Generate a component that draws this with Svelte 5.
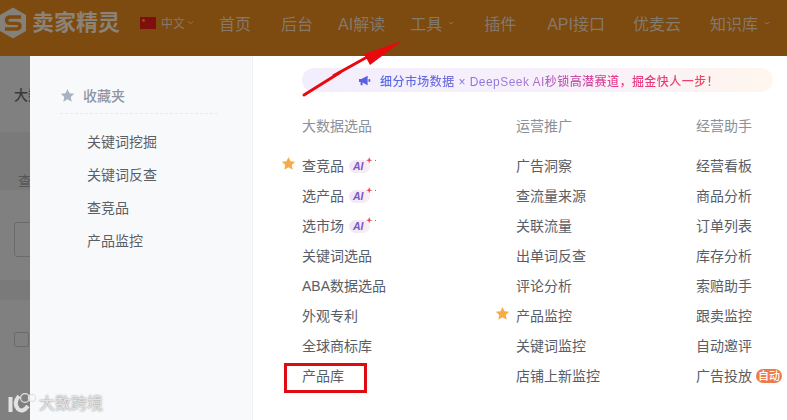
<script>
  const nav = [
    { t: '首页' }, { t: '后台' }, { t: 'AI解读' }, { t: '工具', c: true },
    { t: '插件' }, { t: 'API接口' }, { t: '优麦云' }, { t: '知识库', c: true }
  ];
  const favs = ['关键词挖掘', '关键词反查', '查竞品', '产品监控'];
  const cols = [
    { title: '大数据选品', cls: 'c1', items: [
      { t: '查竞品', ai: true, star: true }, { t: '选产品', ai: true }, { t: '选市场', ai: true },
      { t: '关键词选品' }, { t: 'ABA数据选品' }, { t: '外观专利' }, { t: '全球商标库' }, { t: '产品库' }
    ] },
    { title: '运营推广', cls: 'c2', items: [
      { t: '广告洞察' }, { t: '查流量来源' }, { t: '关联流量' }, { t: '出单词反查' }, { t: '评论分析' },
      { t: '产品监控', star: true }, { t: '关键词监控' }, { t: '店铺上新监控' }
    ] },
    { title: '经营助手', cls: 'c3', items: [
      { t: '经营看板' }, { t: '商品分析' }, { t: '订单列表' }, { t: '库存分析' }, { t: '索赔助手' },
      { t: '跟卖监控' }, { t: '自动邀评' }, { t: '广告投放', auto: true }
    ] }
  ];
  const starPath = 'M12 1.5l3.2 6.9 7.5.9-5.5 5.1 1.5 7.4L12 18.1l-6.7 3.7 1.5-7.4L1.3 9.3l7.5-.9z';
</script>

<div class="page">
  <header class="top">
    <div class="logo">
      <svg class="logo-mark" viewBox="0 0 27 32" width="27" height="32">
        <path d="M13 0.5L26 8V24L13 31.5L0 24V8Z" fill="#85807a"/>
        <path d="M21 10H10.5Q6.5 10 6.5 13.2T10.5 16.4H16.5Q20 16.4 20 19T16.5 22H5" fill="none" stroke="#7d4a10" stroke-width="3.4"/>
      </svg>
      <span class="logo-text">卖家精灵</span>
    </div>
    <div class="lang">
      <svg class="flag" viewBox="0 0 16 12" width="16" height="12">
        <rect width="16" height="12" fill="#7f0f0c"/>
        <circle cx="3.5" cy="3.5" r="1.4" fill="#8a5a10"/>
      </svg>
      <span>中文</span>
      <svg class="chev" viewBox="0 0 8 5" width="7" height="5"><path d="M1 1l3 3 3-3" fill="none" stroke="#8a7f70" stroke-width="1"/></svg>
    </div>
    <nav class="nav">
      {#each nav as n}
        <span class="nav-item">
          {n.t}
          {#if n.c}
            <svg class="chev small" viewBox="0 0 8 5" width="6" height="4"><path d="M1 1l3 3 3-3" fill="none" stroke="#8a7f70" stroke-width="1.2"/></svg>
          {/if}
        </span>
      {/each}
    </nav>
  </header>

  <div class="body">
    <div class="behind">
      <div class="b-row title"><span>大数</span></div>
      <div class="b-row darker tab"><span>查</span></div>
      <div class="b-row search"><span class="box"></span></div>
      <div class="b-row darker thin"></div>
      <div class="b-row check"><span class="cb"></span></div>
    </div>

    <aside class="side">
      <div class="side-head">
        <svg viewBox="0 0 24 24" width="15" height="15"><path d={starPath} fill="#a9b2c0"/></svg>
        <span>收藏夹</span>
      </div>
      <ul class="fav">
        {#each favs as f}<li>{f}</li>{/each}
      </ul>
    </aside>

    <main class="main">
      <div class="banner">
        <svg class="horn" viewBox="0 0 16 14" width="13" height="11">
          <path d="M1 5h3l8-4v12L4 9H1z" fill="#5b5fe0"/>
          <rect x="13" y="5" width="2.4" height="4" rx="1" fill="#5b5fe0"/>
          <rect x="3" y="9" width="2.6" height="4" fill="#5b5fe0"/>
        </svg>
        <span class="grad">细分市场数据 × DeepSeek AI秒锁高潜赛道，掘金快人一步！</span>
      </div>
      <div class="cols">
        {#each cols as col}
          <section class="col {col.cls}">
            <h4>{col.title}</h4>
            <ul>
              {#each col.items as it}
                <li>
                  {#if it.star}
                    <svg class="star" viewBox="0 0 24 24" width="15" height="15"><path d={starPath} fill="#f8ab45"/></svg>
                  {/if}
                  <span>{it.t}</span>
                  {#if it.ai}
                    <span class="ai">AI<svg viewBox="0 0 10 10" width="8" height="8"><path d="M4 0l1 3 3 1-3 1-1 3-1-3-3-1 3-1z" fill="#e8455c"/></svg><i></i></span>
                  {/if}
                  {#if it.auto}<span class="auto">自动</span>{/if}
                </li>
              {/each}
            </ul>
          </section>
        {/each}
      </div>
    </main>
  </div>

  <svg class="arrow" viewBox="0 0 787 420" width="787" height="420">
    <path d="M304 95L340 72.5" stroke="#e8090f" stroke-width="3" stroke-linecap="round"/>
    <path d="M403 41L365 54L371 65Z" fill="#e8090f" transform="translate(-1 0)"/>
    <path d="M333 76L369 56" stroke="#e8090f" stroke-width="3"/>
  </svg>
  <div class="redbox"></div>
  <div class="mark">
    <svg viewBox="0 0 28 24" width="28" height="24">
      <path d="M2.5 5v15M11 4Q5 11 10 17Q15 21 20 14" fill="none" stroke="#e2e2e2" stroke-width="4"/>
      <circle cx="17" cy="6" r="4.4" fill="none" stroke="#e2e2e2" stroke-width="1.2"/>
      <circle cx="24" cy="6" r="3.6" fill="none" stroke="#e2e2e2" stroke-width="1.2"/>
    </svg>
    <span>大数跨境</span>
  </div>
</div>

<style>
  :global(body) { margin: 0; }
  .page {
    position: relative;
    width: 787px;
    height: 420px;
    overflow: hidden;
    font-family: "Liberation Sans", "Noto Sans CJK SC", sans-serif;
    font-size: 14px;
    color: #595d66;
    background: #fff;
  }
  ul { list-style: none; margin: 0; padding: 0; }

  .top {
    height: 56px;
    box-sizing: border-box;
    padding-bottom: 11px;
    background: #7d4a10;
    display: flex;
    align-items: center;
    color: #85796b;
  }
  .logo { display: flex; align-items: center; width: 140px; flex: none; }
  .logo-mark { flex: none; }
  .logo-text {
    margin-left: 5px;
    font-size: 22px;
    font-weight: 700;
    color: #8b8378;
    line-height: 1;
    white-space: nowrap;
  }
  .lang { display: flex; align-items: center; width: 79px; flex: none; font-size: 12px; color: #85796b; }
  .lang span { margin: 0 2px 0 5px; }
  .nav { display: flex; font-size: 16px; white-space: nowrap; }
  .nav-item { display: flex; align-items: center; margin-right: 30px; }
  .nav-item:nth-child(3) { margin-right: 25px; margin-left: -5px; }
  .nav-item:nth-child(5) { margin-right: 31px; }
  .nav-item:nth-child(6) { margin-right: 28px; }
  .nav-item:nth-child(7) { margin-right: 29px; }
  .chev.small { margin-left: 6px; }

  .body { display: flex; height: 364px; }
  .behind {
    width: 30px;
    flex: none;
    overflow: hidden;
    background: #808080;
    display: flex;
    flex-direction: column;
    white-space: nowrap;
    color: #38393b;
  }
  .b-row { flex: none; padding-left: 14px; box-sizing: border-box; }
  .title { height: 76px; padding-top: 29px; font-weight: 500; line-height: 20px; }
  .tab { height: 58px; padding-top: 39px; padding-left: 18px; line-height: 20px; color: #555; }
  .darker { background: #7a7a7a; }
  .search { height: 90px; padding-top: 32px; }
  .box {
    display: block; width: 40px; height: 35px;
    border: 1px solid #6b6b6b; border-radius: 3px; box-sizing: border-box;
  }
  .thin { height: 20px; }
  .check { padding-top: 32px; }
  .cb { display: block; width: 13px; height: 13px; border: 1px solid #6b6b6b; border-radius: 2px; }

  .side {
    width: 223px;
    flex: none;
    box-sizing: border-box;
    background: #f8f9fb;
    border-right: 1px solid #eef0f3;
    padding: 24px 34px 0 30px;
  }
  .side-head {
    display: flex;
    align-items: center;
    gap: 8px;
    height: 30px;
    padding-bottom: 3px;
    border-bottom: 1px dashed #e8eaee;
    font-size: 14px;
    font-weight: 500;
    color: #8f95a1;
  }
  .fav { padding: 12px 0 0 27px; }
  .fav li { height: 33px; line-height: 33px; color: #5b5e66; }

  .main { flex: 1; position: relative; padding: 12px 14px 0 49px; min-width: 0; }
  .banner {
    height: 24px;
    border-radius: 12px;
    background: linear-gradient(90deg, #f3eefd 0%, #f7f0fb 55%, #fff6ee 100%);
    display: flex;
    align-items: center;
    font-size: 12px;
    font-weight: 500;
    padding-left: 56px;
    white-space: nowrap;
  }
  .horn { margin-right: 9px; flex: none; }
  .grad {
    background: linear-gradient(90deg, #4f67e6 0%, #9a7bd8 40%, #e8358a 70%, #f0445f 100%);
    -webkit-background-clip: text;
    background-clip: text;
    color: transparent;
    letter-spacing: 0.45px;
  }

  .cols { display: flex; margin-top: 22px; }
  .c1 { width: 214px; flex: none; }
  .c2 { width: 180px; flex: none; }
  .c3 { flex: 1; }
  h4 { margin: 0 0 13px; font-size: 14px; font-weight: 400; line-height: 24px; color: #8c9099; }
  .col li {
    position: relative;
    height: 30px;
    line-height: 30px;
    display: flex;
    align-items: center;
    white-space: nowrap;
    color: #595d66;
  }
  .star { position: absolute; left: -21px; top: 5px; }
  .ai {
    position: relative;
    display: inline-flex;
    align-items: center;
    height: 13px;
    width: 21px;
    margin-left: 5px;
    padding-left: 4px;
    box-sizing: border-box;
    border-radius: 7px;
    background: linear-gradient(90deg, #efe7f8, #fbeef0);
    font-size: 10.5px;
    line-height: 13px;
    font-weight: 700;
    font-style: italic;
    color: #7a55c8;
  }
  .ai svg { position: absolute; right: -4px; top: -3px; }
  .ai i { position: absolute; right: -6px; top: 0; width: 1px; height: 1px; background: #e8455c; }
  .auto {
    margin-left: 4px;
    width: 26px;
    height: 14px;
    border-radius: 7px;
    background: #ee7a4c;
    color: #fff;
    font-size: 11px;
    line-height: 14px;
    text-align: center;
    font-weight: 500;
  }

  .arrow { position: absolute; left: 0; top: 0; pointer-events: none; }
  .redbox {
    position: absolute;
    left: 284px; top: 363px;
    width: 83px; height: 30px;
    box-sizing: border-box;
    border: 3px solid #de0b12;
  }
  .mark {
    position: absolute;
    left: 8px; top: 392px;
    display: flex;
    align-items: center;
    gap: 3px;
    color: #e4e4e4;
    font-size: 16px;
    line-height: 24px;
    text-shadow: 0 0 2px #777;
  }
</style>
